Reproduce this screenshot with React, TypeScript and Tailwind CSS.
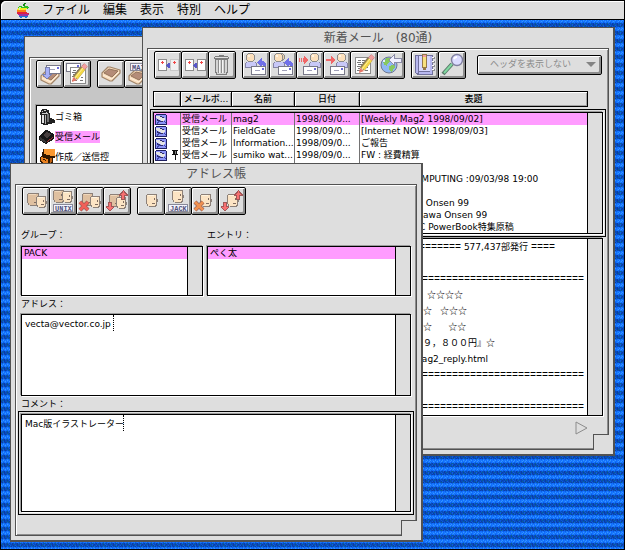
import type { ReactNode } from 'react'

const menus = ['ファイル', '編集', '表示', '特別', 'ヘルプ']

const mails = [
  { box: '受信メール', name: 'mag2', date: '1998/09/0...', subject: '[Weekly Mag2 1998/09/02]', selected: true },
  { box: '受信メール', name: 'FieldGate', date: '1998/09/0...', subject: '[Internet NOW! 1998/09/03]' },
  { box: '受信メール', name: 'Information...', date: '1998/09/0...', subject: 'ご報告' },
  { box: '受信メール', name: 'sumiko wat...', date: '1998/09/0...', subject: 'FW : 経費精算', pinned: true },
  { subject: '' },
  { subject: 'COMPUTING :09/03/98 19:00', indent: 'pl-[48px]' },
  { subject: '' },
  { subject: ' Onsen 99', indent: 'pl-[63px]' },
  { subject: 'awa Onsen 99', indent: 'pl-[63px]' },
  { subject: 'C PowerBook特集原稿', indent: 'pl-[59px]' },
]

/* ---------- desktop ---------- */

const weave = [
  'dbadbbcbdabbdbabdcbadbba',
  'bdabdbabcbdabbdabbdbcabd',
  'malmamlmalmmalmamlmalmam',
  'lmhmlmhlmhmlmlhmlmhmlhml',
  'hlmlhmlmhlmlhlmmlhmlhmlm',
  'mlamlmalmamlmlamlmalmlam',
  'abbdabcabbadbabbdabcbabd',
  'bcbdbbdbabbdbcbbdbbabdbb',
]
const weaveColors: Record<string, string> = {
  a: '#0c60dc',
  b: '#084cbc',
  c: '#08688c',
  d: '#0c3ca4',
  l: '#1c7cfc',
  m: '#106cff',
  h: '#3498ff',
}

function Wallpaper() {
  return (
    <svg className="absolute inset-0 h-full w-full" shapeRendering="crispEdges" aria-hidden="true">
      <defs>
        <pattern id="weave" width="24" height="8" patternUnits="userSpaceOnUse">
          {weave.map((row, y) =>
            row.split('').map((c, x) => (
              <rect key={`${x}-${y}`} x={x} y={y} width="1" height="1" fill={weaveColors[c]} />
            )),
          )}
        </pattern>
      </defs>
      <rect width="100%" height="100%" fill="url(#weave)" />
    </svg>
  )
}

function AppleLogo() {
  return (
    <svg width="13" height="15" viewBox="0 0 13 15" shapeRendering="crispEdges" aria-hidden="true">
      <path d="M7 0h2v1h-1v2h-2v-2h1z" fill="#188a18" />
      <path d="M2 3h3v1h2v-1h4v1h1v1h-1v1h-10v-2h1z" fill="#30c020" />
      <path d="M1 5h9v1h-1v1h-9v-1h1z" fill="#f8e820" />
      <path d="M0 7h9v2h-9z" fill="#f88018" />
      <path d="M0 9h10v1h2v1h-12z" fill="#e02040" />
      <path d="M1 11h11v1h-1v1h-9v-1h-1z" fill="#a030a0" />
      <path d="M2 13h9v1h-1v1h-2v-1h-3v1h-2v-1h-1z" fill="#2078d8" />
      <path d="M2 4h2v1h-1v2h-1z" fill="#c8f8b0" />
    </svg>
  )
}

/* ---------- toolbar drawings ---------- */

function Icon({ children }: { children: ReactNode }) {
  return (
    <svg width="26" height="26" viewBox="0 0 26 26" className="shrink-0" shapeRendering="crispEdges" fill="none" aria-hidden="true">
      {children}
    </svg>
  )
}

function Page({ x, faded }: { x: number; faded?: boolean }) {
  return (
    <g transform={`translate(${x} 7)`}>
      <path d="M0 0h9v12h-9z" fill={faded ? '#c8c8c8' : '#8c8c8c'} />
      <path d="M1 1h7v10h-7z" fill={faded ? '#f0f0f0' : '#fff'} />
      <path d="M4 2h1v3h-1zM3 3h3v1h-3z" fill="#f04848" />
    </g>
  )
}

function PageArrow() {
  return <path d="M11 13h1v-1h1v-1h2v5h-2v-1h-1v-1h-1z" fill="#5858c8" />
}

function Person({ x, back }: { x: number; back?: boolean }) {
  return (
    <g transform={`translate(${x} 0)`}>
      {back && (
        <>
          <path d="M6 1h4v1h1v1h1v4h-1v1h-1v1h-4z" fill="#8c8c8c" />
          <path d="M7 2h3v1h1v4h-1v1h-3z" fill="#ecd0ac" />
        </>
      )}
      <path d="M1 10h10v1h1v5h-12v-5h1z" fill="#8484a4" />
      <path d="M2 10h8v1h1v4h-10v-4h1z" fill="#c8c8f8" />
      <path d="M3 1h5v1h1v1h1v5h-1v1h-1v1h-5v-1h-1v-1h-1v-5h1v-1h1z" fill="#8c8c8c" />
      <path d="M3 2h5v1h1v5h-1v1h-5v-1h-1v-5h1z" fill="#fce0bc" />
      <path d="M3 3h2v2h-2z" fill="#fff4e4" />
    </g>
  )
}

function Envelope({ x, y }: { x: number; y: number }) {
  return (
    <g transform={`translate(${x} ${y})`}>
      <path d="M0 0h15v9h-15z" fill="#787888" />
      <path d="M1 1h13v7h-13z" fill="#fff" />
      <path d="M11 2h2v2h-2z" fill="#6868d8" />
      <path d="M4 4h5v1h-5z" fill="#a0a0b8" />
    </g>
  )
}

function ReplyArrow() {
  return <path d="M15 9h1v-1h1v-1h1v-1h1v3h2v1h1v1h1v5h-2v-2h-1v-1h-1v2h-1v-1h-1v-1h-1v-1h-1v-1h-1v-1h1z" fill="#7070e8" />
}

function Pencil() {
  return (
    <g shapeRendering="auto">
      <path d="M11 17l8-10" stroke="#8c7c58" strokeWidth="6" />
      <path d="M12 17l8-10" stroke="#f4d848" strokeWidth="4" />
      <path d="M11 17l8-10" stroke="#fff0a0" strokeWidth="1" />
      <path d="M19 7l3-3" stroke="#b07070" strokeWidth="5" />
      <path d="M19 7l3-3" stroke="#f4a0a0" strokeWidth="4" />
      <path d="M9 16l4 3l-5 2z" fill="#e87868" />
    </g>
  )
}

function Note() {
  return (
    <g>
      <path d="M4 5h16v17h-16z" fill="#8c8c8c" />
      <path d="M5 6h14v15h-14z" fill="#fff" />
      <path
        d="M7 8h3v1h-3zM11 8h3v1h-3zM6 10h4v1h-4zM11 10h2v1h-2zM7 12h4v1h-4zM6 14h3v1h-3zM7 16h2v1h-2zM6 18h5v1h-5zM14 18h3v1h-3zM15 15h2v1h-2z"
        fill="#787878"
      />
    </g>
  )
}

function Tray({ y = 0 }: { y?: number }) {
  return (
    <g transform={`translate(0 ${y})`} shapeRendering="auto" strokeLinejoin="round">
      <path d="M4 12l6-6h2l10 3v3l-8 8h-2l-8-4z" fill="#f8dcbc" stroke="#a08468" strokeWidth="1.200" />
      <path d="M6 12l5-4l9 2l-6 6z" fill="#b48c78" stroke="#94745c" />
      <path d="M5 14l9 4l7-7" stroke="#fff0dc" />
    </g>
  )
}

function Face({ x, y, dark, width = 9, height = 12 }: { x: number; y: number; dark?: boolean; width?: number; height?: number }) {
  return (
    <g transform={`translate(${x} ${y})`}>
      <path d={`M1 0h${width}v${height - 1}h-1v1h-${width - 3}v-1h-2v-2h-1v-${height - 4}h1z`} fill="#8c8078" />
      <path d={`M1 1h${width - 1}v${height - 3}h-1v1h-${width - 3}v-2h-1z`} fill={dark ? '#dfc0a0' : '#fce4c4'} />
      <path d={`M2 1h${width - 4}v1h-${width - 4}z`} fill={dark ? '#f0d8bc' : '#fff4e0'} />
      <path d={`M${width - 2} 4h1v2h-1zM${width - 4} ${height - 4}h3v1h-3z`} fill="#806c60" />
      <path d={`M${width + 1} 5h1v3h-1z`} fill="#8c8078" />
    </g>
  )
}

function Cross({ color }: { color: string }) {
  return (
    <g shapeRendering="auto">
      <path d="M3 14l8 8M11 14l-8 8" stroke="#8c5850" strokeWidth="4" />
      <path d="M3 14l8 8M11 14l-8 8" stroke={color} strokeWidth="3" />
    </g>
  )
}

function UpDown() {
  return (
    <g>
      <path d="M19 2h1v1h1v1h1v1h1v1h1v2h-3v4h-4v-4h-2v-2h1v-1h1v-1h1v-1h1z" fill="#a05858" />
      <path d="M19 3h1v2h1v1h1v1h-2v4h-2v-4h-1v-1h1v-1h1z" fill="#f87070" />
      <path d="M4 14h4v4h2v2h-1v1h-1v1h-1v1h-2v-1h-1v-1h-1v-1h-1v-2h2z" fill="#a05858" />
      <path d="M5 15h2v4h2v1h-1v1h-1v1h-2v-1h-1v-1h-1v-1h2z" fill="#f87070" />
    </g>
  )
}

function NameTag({ x, y, children }: { x: number; y: number; children: string }) {
  return (
    <g transform={`translate(${x} ${y})`}>
      <path d="M0 0h20v8h-20z" fill="#888898" />
      <path d="M1 1h18v6h-18z" fill="#f4f4ff" />
      <text x="2" y="7" fill="#505078" fontSize="7" fontWeight="bold" fontFamily="Liberation Mono, monospace">
        {children}
      </text>
    </g>
  )
}

const mailTools: { label: string; icon: ReactNode }[][] = [
  [
    { label: '前の未読', icon: <><Page x={3} /><Page x={15} faded /><PageArrow /></> },
    { label: '次の未読', icon: <><Page x={3} /><Page x={15} /><PageArrow /></> },
    {
      label: 'ゴミ箱',
      icon: (
        <>
          <path d="M6 7h13v14h-1v2h-11v-2h-1z" fill="#7c7c7c" />
          <path d="M7 8h11v12h-1v2h-9v-2h-1z" fill="#d4d4d4" />
          <path d="M9 8h1v13h-1zM12 8h1v13h-1zM15 8h1v13h-1z" fill="#8c8c8c" />
          <path d="M10 8h1v13h-1zM13 8h1v13h-1z" fill="#f4f4f4" />
          <path d="M10 3h5v1h4v1h1v2h-15v-2h1v-1h4z" fill="#7c7c7c" />
          <path d="M6 5h13v1h-13z" fill="#e0e0e0" />
        </>
      ),
    },
  ],
  [
    { label: '返信', icon: <><Person x={2} /><ReplyArrow /><Envelope x={8} y={14} /></> },
    { label: '全員に返信', icon: <><Person x={3} back /><ReplyArrow /><Envelope x={8} y={14} /></> },
    {
      label: '転送',
      icon: <><Person x={12} /><path d="M2 6h1v4h-1zM4 6h1v4h-1zM6 6h1v4h-1zM7 6v-2h1v1h1v1h1v1h1v2h-1v1h-1v1h-1v1h-1z" fill="#f06868" /><Envelope x={6} y={14} /></>,
    },
    {
      label: '再送',
      icon: <><Person x={12} /><path d="M2 7h5v-3h1v1h1v1h1v1h1v2h-1v1h-1v1h-1v1h-1v-3h-5z" fill="#f06868" /><Envelope x={6} y={14} /></>,
    },
    { label: '編集', icon: <><Note /><Pencil /></> },
    {
      label: 'ブラウザ',
      icon: (
        <>
          <circle cx="11" cy="13" r="8" fill="#90b8f4" stroke="#707890" shapeRendering="auto" />
          <path d="M5 9l3-3h4l1 3l-3 2l-1 3l-3-1zM11 14l4-1l2 2l-3 5l-3-2z" fill="#88c860" />
          <path d="M5 8h2v2h-2z" fill="#e0f0ff" />
          <path d="M11 8l5-5v3h7v4h-7v3z" fill="#f0f0ff" stroke="#8c8ca8" />
        </>
      ),
    },
  ],
  [
    {
      label: 'アドレス帳',
      icon: (
        <>
          <path d="M3 3h18v20h-16v-1h-1v-1h-1z" fill="#70709c" />
          <path d="M4 4h2v17h-2zM7 20h13v2h-13zM18 4h2v16h-2z" fill="#b8b8f0" />
          <path d="M7 4h11v15h-11z" fill="#d8d8ff" />
          <path d="M20 5h3v2h-3zM20 9h3v2h-3zM20 13h3v2h-3zM20 17h3v2h-3z" fill="#8c8c94" />
          <path d="M20 5h2v1h-2zM20 9h2v1h-2zM20 13h2v1h-2zM20 17h2v1h-2z" fill="#fff" />
          <path d="M10 2h5v14h-1v2h-3v-2h-1z" fill="#94784c" />
          <path d="M11 5h3v10h-3z" fill="#f8e080" />
          <path d="M11 3h3v2h-3z" fill="#f4a0a0" />
        </>
      ),
    },
    {
      label: '検索',
      icon: (
        <g shapeRendering="auto">
          <path d="M13 12l-9 10" stroke="#587868" strokeWidth="4" />
          <path d="M13 12l-8 9" stroke="#80d8a0" strokeWidth="2" />
          <circle cx="18" cy="8" r="5.5" fill="#dcdcff" stroke="#8080a0" strokeWidth="1.400" />
          <path d="M15 7c1-2 2-2 3-2" stroke="#fff" strokeWidth="2" />
        </g>
      ),
    },
  ],
]

const addressTools: { label: string; icon: ReactNode }[][] = [
  [
    { label: 'グループ', icon: <><Face x={4} y={5} dark width={11} height={13} /><Face x={13} y={8} /></> },
    { label: 'UNIX', icon: <><Face x={3} y={2} dark width={10} height={13} /><Face x={12} y={3} /><NameTag x={3} y={16}>UNIX</NameTag></> },
    { label: 'グループ削除', icon: <><Face x={5} y={5} dark width={10} height={13} /><Face x={13} y={8} /><Cross color="#f06058" /></> },
    { label: 'グループ移動', icon: <><Face x={5} y={6} dark width={10} height={13} /><Face x={12} y={9} /><UpDown /></> },
  ],
  [
    { label: 'エントリ', icon: <Face x={8} y={6} width={10} height={13} /> },
    { label: 'JACK', icon: <><Face x={7} y={2} width={10} height={13} /><NameTag x={3} y={16}>JACK</NameTag></> },
    { label: 'エントリ削除', icon: <><Face x={8} y={6} width={10} height={13} /><Cross color="#f09050" /></> },
    { label: 'エントリ移動', icon: <><Face x={8} y={6} width={10} height={13} /><UpDown /></> },
  ],
]

const boxTools: { label: string; icon: ReactNode }[][] = [
  [
    { label: '受信', icon: <><Tray y={3} /><Envelope x={9} y={4} /><path d="M8 6h4v7h3l-5 5l-5-5h3z" fill="#a8b0f8" stroke="#7880b0" /></> },
    { label: '新規', icon: <><Envelope x={2} y={2} /><g transform="translate(2 1)"><Note /></g><Pencil /></> },
  ],
  [
    { label: 'メールボックス', icon: <Tray /> },
    { label: 'MAIL', icon: <><Tray y={3} /><NameTag x={5} y={2}>MAIL</NameTag></> },
  ],
]

function ToolButton({ label, children }: { label: string; children: ReactNode }) {
  return (
    <button
      type="button"
      aria-label={label}
      className="-mr-px flex h-7 w-7 shrink-0 items-center justify-center rounded-[2px] border border-black bg-[#dedede] shadow-[inset_1px_1px_0_#fff,inset_-2px_-2px_0_#8c8c8c]"
    >
      <Icon>{children}</Icon>
    </button>
  )
}

function Toolbar({ groups }: { groups: { label: string; icon: ReactNode }[][] }) {
  return (
    <div className="flex gap-[7px]">
      {groups.map((group, i) => (
        <div key={i} className="flex">
          {group.map((tool) => (
            <ToolButton key={tool.label} label={tool.label}>
              {tool.icon}
            </ToolButton>
          ))}
        </div>
      ))}
    </div>
  )
}

/* ---------- small drawings in the lists ---------- */

function MailIcon() {
  return (
    <svg width="12" height="11" viewBox="0 0 12 11" shapeRendering="crispEdges" aria-hidden="true">
      <path d="M1 0h10v1h1v10h-12v-10h1z" fill="#202060" />
      <path d="M1 1h10v9h-10z" fill="#8c94f8" />
      <path d="M1 2h4v1h3v1h2v2h-1v1h-3v-1h-2v-1h-2v-1h-1z" fill="#e4e4e4" />
      <path d="M5 2h2v1h2v1h-2v-1h-2zM2 5h1v1h2v1h3v1h-4v-1h-2z" fill="#30306c" />
      <path d="M1 9l3-2h1l-3 3zM8 7h1l2 2v1z" fill="#4048a8" />
    </svg>
  )
}

function PinIcon() {
  return (
    <svg width="6" height="10" viewBox="0 0 6 10" shapeRendering="crispEdges" aria-hidden="true">
      <path d="M0 0h6v1h-1v3h1v1h-2v5h-1v-5h-3v-1h1v-3h-1z" fill="#101010" />
      <path d="M3 1h1v3h-1z" fill="#808080" />
    </svg>
  )
}

function TrashIcon() {
  return (
    <svg width="16" height="16" viewBox="0 0 16 16" shapeRendering="crispEdges" aria-hidden="true">
      <path d="M3 0h5v1h2v3h1v5h2v1h2v1h1v3h-3v1h-4v1h-5v-1h-2v-9h-1v-3h1v-2h1z" fill="#202020" />
      <path d="M3 6h2v8h-2z" fill="#e4e4e4" />
      <path d="M6 6h1v9h-1z" fill="#b0b0b0" />
      <path d="M8 5h2v8h-2z" fill="#707070" />
      <path d="M3 2h1v1h-1zM5 1h2v1h-2zM3 4h6v1h-6zM7 3h1v1h-1z" fill="#c8c8c8" />
    </svg>
  )
}

function InboxIcon() {
  return (
    <svg width="16" height="16" viewBox="0 0 16 16" shapeRendering="crispEdges" aria-hidden="true">
      <path d="M0 7l7-6h1l7 4v5l-8 5l-7-4z" fill="#181818" />
      <path d="M4 6l4-3l4 2l-4 4z" fill="#484040" />
      <path d="M1 8l6 4v2l-6-3z" fill="#383838" />
      <path d="M8 12l6-4v1l-6 4z" fill="#a03030" />
    </svg>
  )
}

function OutboxIcon() {
  return (
    <svg width="16" height="16" viewBox="0 0 16 16" shapeRendering="crispEdges" aria-hidden="true">
      <path d="M4 0h12v9h-2v5h-2v2h-7l-4-3v-5l2-2z" fill="#301800" />
      <path d="M5 0h11v7h-3l-8-2z" fill="#f89830" />
      <path d="M2 8l7 2v5h-3l-4-3z" fill="#e88020" />
      <path d="M11 9h2v4h-1v1h-1z" fill="#c06010" />
      <path d="M4 10l3 1v1l-3-1z" fill="#301800" />
    </svg>
  )
}

/* ---------- window parts ---------- */

function Window({ title, place, tone = 'bg-[#dedede]', children }: { title?: string; place: string; tone?: string; children: ReactNode }) {
  return (
    <section
      className={`absolute border-t border-r-2 border-b-2 border-l border-[#525252] bg-[#dedede] px-1 pb-1 ${place}`}
    >
      <h2 className="h-5 text-center text-xs leading-5 whitespace-pre text-[#525252]">{title}</h2>
      <div className={`relative border border-[#525252] px-0.5 pt-0.5 shadow-[inset_1px_1px_0_#fff,inset_-1px_-1px_0_#8c8c8c] ${tone}`}>
        {children}
        <span className="absolute -right-px -bottom-px h-4 w-4 border-t border-l border-[#525252] bg-[#dedede]" />
      </div>
    </section>
  )
}

function ScrollBox({ size, children }: { size: string; children: ReactNode }) {
  return (
    <div className={`flex border border-black bg-white shadow-[-1px_-1px_0_#9c9c9c,1px_1px_0_#fff] ${size}`}>
      <div className="relative min-w-0 flex-1 overflow-hidden">{children}</div>
      <div className="w-[15px] shrink-0 border-l border-black bg-[#dedede]" />
    </div>
  )
}

function FocusRing({ children }: { children: ReactNode }) {
  return <div className="border border-black p-0.5">{children}</div>
}

function MailColumns() {
  return (
    <colgroup>
      <col className="w-[27px]" />
      <col className="w-[51px]" />
      <col className="w-[63px]" />
      <col className="w-[65px]" />
      <col />
    </colgroup>
  )
}

function Rule({ count }: { count: number }) {
  return <span className="font-['Liberation_Mono',monospace] text-[10px]">{'='.repeat(count)}</span>
}

/* ---------- windows ---------- */

function MailboxWindow() {
  return (
    <Window place="top-[35px] left-[23px] w-[330px]" tone="bg-[#c6c6c6]">
      <div className="pl-1">
        <Toolbar groups={boxTools} />
        <div className="mt-4 pt-px">
          <ScrollBox size="h-60">
            <ul className="pt-px pl-0.5 leading-3">
              <li className="flex h-5 items-center"><TrashIcon />ゴミ箱</li>
              <li className="flex h-5 items-center"><InboxIcon /><span className="bg-[#ff9cff]">受信メール</span></li>
              <li className="flex h-5 items-center"><OutboxIcon />作成／送信控</li>
            </ul>
          </ScrollBox>
        </div>
      </div>
      <div className="h-8" />
    </Window>
  )
}

function NewMailWindow() {
  return (
    <Window title="新着メール　(80通)" place="top-[26px] left-[141px] w-[473px]">
      <div className="flex items-start justify-between px-1">
        <Toolbar groups={mailTools} />
        <div className="relative mt-1 h-5 w-[125px]">
          <select
            disabled
            aria-label="ヘッダの表示"
            className="h-full w-full appearance-none rounded-[2px] border border-black bg-[#dedede] pl-3 text-[#8c8c8c] opacity-100 shadow-[inset_1px_1px_0_#fff,inset_-2px_-2px_0_#8c8c8c]"
          >
            <option>ヘッダを表示しない</option>
          </select>
          <svg className="absolute top-[7px] right-[6px]" width="10" height="5" viewBox="0 0 10 5" aria-hidden="true">
            <path d="M0 0h10l-5 5z" fill="#848484" />
          </svg>
        </div>
      </div>

      <div className="mt-3 mb-0.5 pr-[18px] pl-[3px]">
        <table className="w-full table-fixed border-separate border-spacing-0 border border-r-0 border-black">
          <MailColumns />
          <thead>
            <tr className="h-3.5 leading-3">
              {['', 'メールボ...', '名前', '日付', '表題'].map((head) => (
                <th
                  key={head}
                  scope="col"
                  className="border-r border-black p-0 text-center font-medium whitespace-nowrap shadow-[inset_1px_1px_0_#fff,inset_-1px_-1px_0_#a4a4a4]"
                >
                  {head}
                </th>
              ))}
            </tr>
          </thead>
        </table>
      </div>

      <FocusRing>
        <ScrollBox size="h-[122px]">
          <table aria-label="メール一覧" className="w-full table-fixed border-separate border-spacing-0">
            <MailColumns />
            <tbody>
              {mails.map((mail, i) => (
                <tr key={i} className={`h-3 leading-3 ${mail.selected ? 'bg-[#ff9cff]' : ''}`}>
                  <td className="border-r border-[#737373] p-0">
                    {mail.box && (
                      <div className="flex h-3 items-center justify-between pr-0.5 pl-px">
                        <MailIcon />
                        {mail.pinned && <PinIcon />}
                      </div>
                    )}
                  </td>
                  <td className="border-r border-[#737373] p-0 pl-px whitespace-nowrap">{mail.box}</td>
                  <td className="border-r border-[#737373] p-0 pl-px whitespace-nowrap">{mail.name}</td>
                  <td className="border-r border-[#737373] p-0 pl-px whitespace-nowrap">{mail.date}</td>
                  <td className={`p-0 whitespace-pre ${mail.indent ?? 'pl-px'}`}>{mail.subject}</td>
                </tr>
              ))}
            </tbody>
          </table>
        </ScrollBox>
      </FocusRing>

      <div className="mt-px px-[3px]">
        <ScrollBox size="h-[178px]">
          <div className="pl-[265px] leading-4 whitespace-pre [&>p]:h-4">
            <p><Rule count={7} /> 577,437部発行 <Rule count={4} /></p>
            <p />
            <p> <Rule count={27} /></p>
            <div className="font-['Noto_Sans_CJK_JP',sans-serif] [&>p]:h-4">
              <p>{'    ☆☆☆☆'}</p>
              <p>{'  ☆    ☆☆☆'}</p>
              <p>{'  ☆        ☆☆'}</p>
              <p>{'  ９，８００円』☆'}</p>
            </div>
            <p> ag2_reply.html</p>
            <p> <Rule count={27} /></p>
            <p />
            <p> <Rule count={27} /></p>
          </div>
        </ScrollBox>
      </div>

      <div className="flex h-[33px] justify-end pt-[5px] pr-[18px]">
        <svg width="13" height="14" viewBox="0 0 13 14" fill="none" aria-hidden="true">
          <path d="M1 1v12l11-6z" stroke="#8c8c8c" />
        </svg>
      </div>
    </Window>
  )
}

function AddressWindow() {
  return (
    <Window title="アドレス帳" place="top-[162px] left-[9px] w-[413px]">
      <div className="pl-1">
        <Toolbar groups={addressTools} />
      </div>
      <div className="mt-3.5 flex gap-1 px-[3px]">
        <div className="w-[182px]">
          <h3 id="group-label" className="h-[17px] leading-3">グループ：</h3>
          <ScrollBox size="h-[50px]">
            <ul role="listbox" aria-labelledby="group-label" className="leading-3">
              <li role="option" aria-selected="true" className="bg-[#ff9cff] pl-0.5">PACK</li>
            </ul>
          </ScrollBox>
        </div>
        <div className="flex-1">
          <h3 id="entry-label" className="h-[17px] leading-3">エントリ：</h3>
          <ScrollBox size="h-[50px]">
            <ul role="listbox" aria-labelledby="entry-label" className="leading-3">
              <li role="option" aria-selected="true" className="bg-[#ff9cff] pl-0.5">ぺく太</li>
            </ul>
          </ScrollBox>
        </div>
      </div>
      <div className="mt-0.5 px-[3px]">
        <label htmlFor="address" className="block h-4 leading-3">アドレス：</label>
        <ScrollBox size="h-[82px]">
          <textarea
            id="address"
            spellCheck={false}
            defaultValue="vecta@vector.co.jp"
            className="block h-full w-full resize-none px-[3px] pt-0.5 leading-3.5 outline-none"
          />
          <span className="absolute top-0 left-[91px] h-4 border-l border-dotted border-black" />
        </ScrollBox>
      </div>
      <label htmlFor="comment" className="mt-0.5 mb-px block h-3 px-[3px] leading-3">コメント：</label>
      <FocusRing>
        <ScrollBox size="h-[98px]">
          <textarea
            id="comment"
            spellCheck={false}
            defaultValue="Mac版イラストレーター"
            className="block h-full w-full resize-none px-[3px] pt-0.5 leading-3.5 outline-none"
          />
          <span className="absolute top-0 left-[101px] h-4 border-l border-dotted border-black" />
        </ScrollBox>
      </FocusRing>
      <div className="h-5" />
    </Window>
  )
}

export default function App() {
  return (
    <div
      lang="ja"
      className="relative min-h-screen overflow-hidden border border-black font-['DejaVu_Sans','Noto_Sans_CJK_JP',sans-serif] text-[9px] text-black"
    >
      <Wallpaper />
      <header className="relative flex h-[19px] items-center rounded-tl-[5px] border-b border-black bg-[#dedede] pl-4 shadow-[inset_1px_1px_0_#fff,0_-5px_0_#000]">
        <AppleLogo />
        <nav className="flex gap-[13px] pl-3 text-xs">
          {menus.map((menu) => (
            <button key={menu} type="button" className="leading-4">
              {menu}
            </button>
          ))}
        </nav>
      </header>
      <main>
        <MailboxWindow />
        <NewMailWindow />
        <AddressWindow />
      </main>
    </div>
  )
}
